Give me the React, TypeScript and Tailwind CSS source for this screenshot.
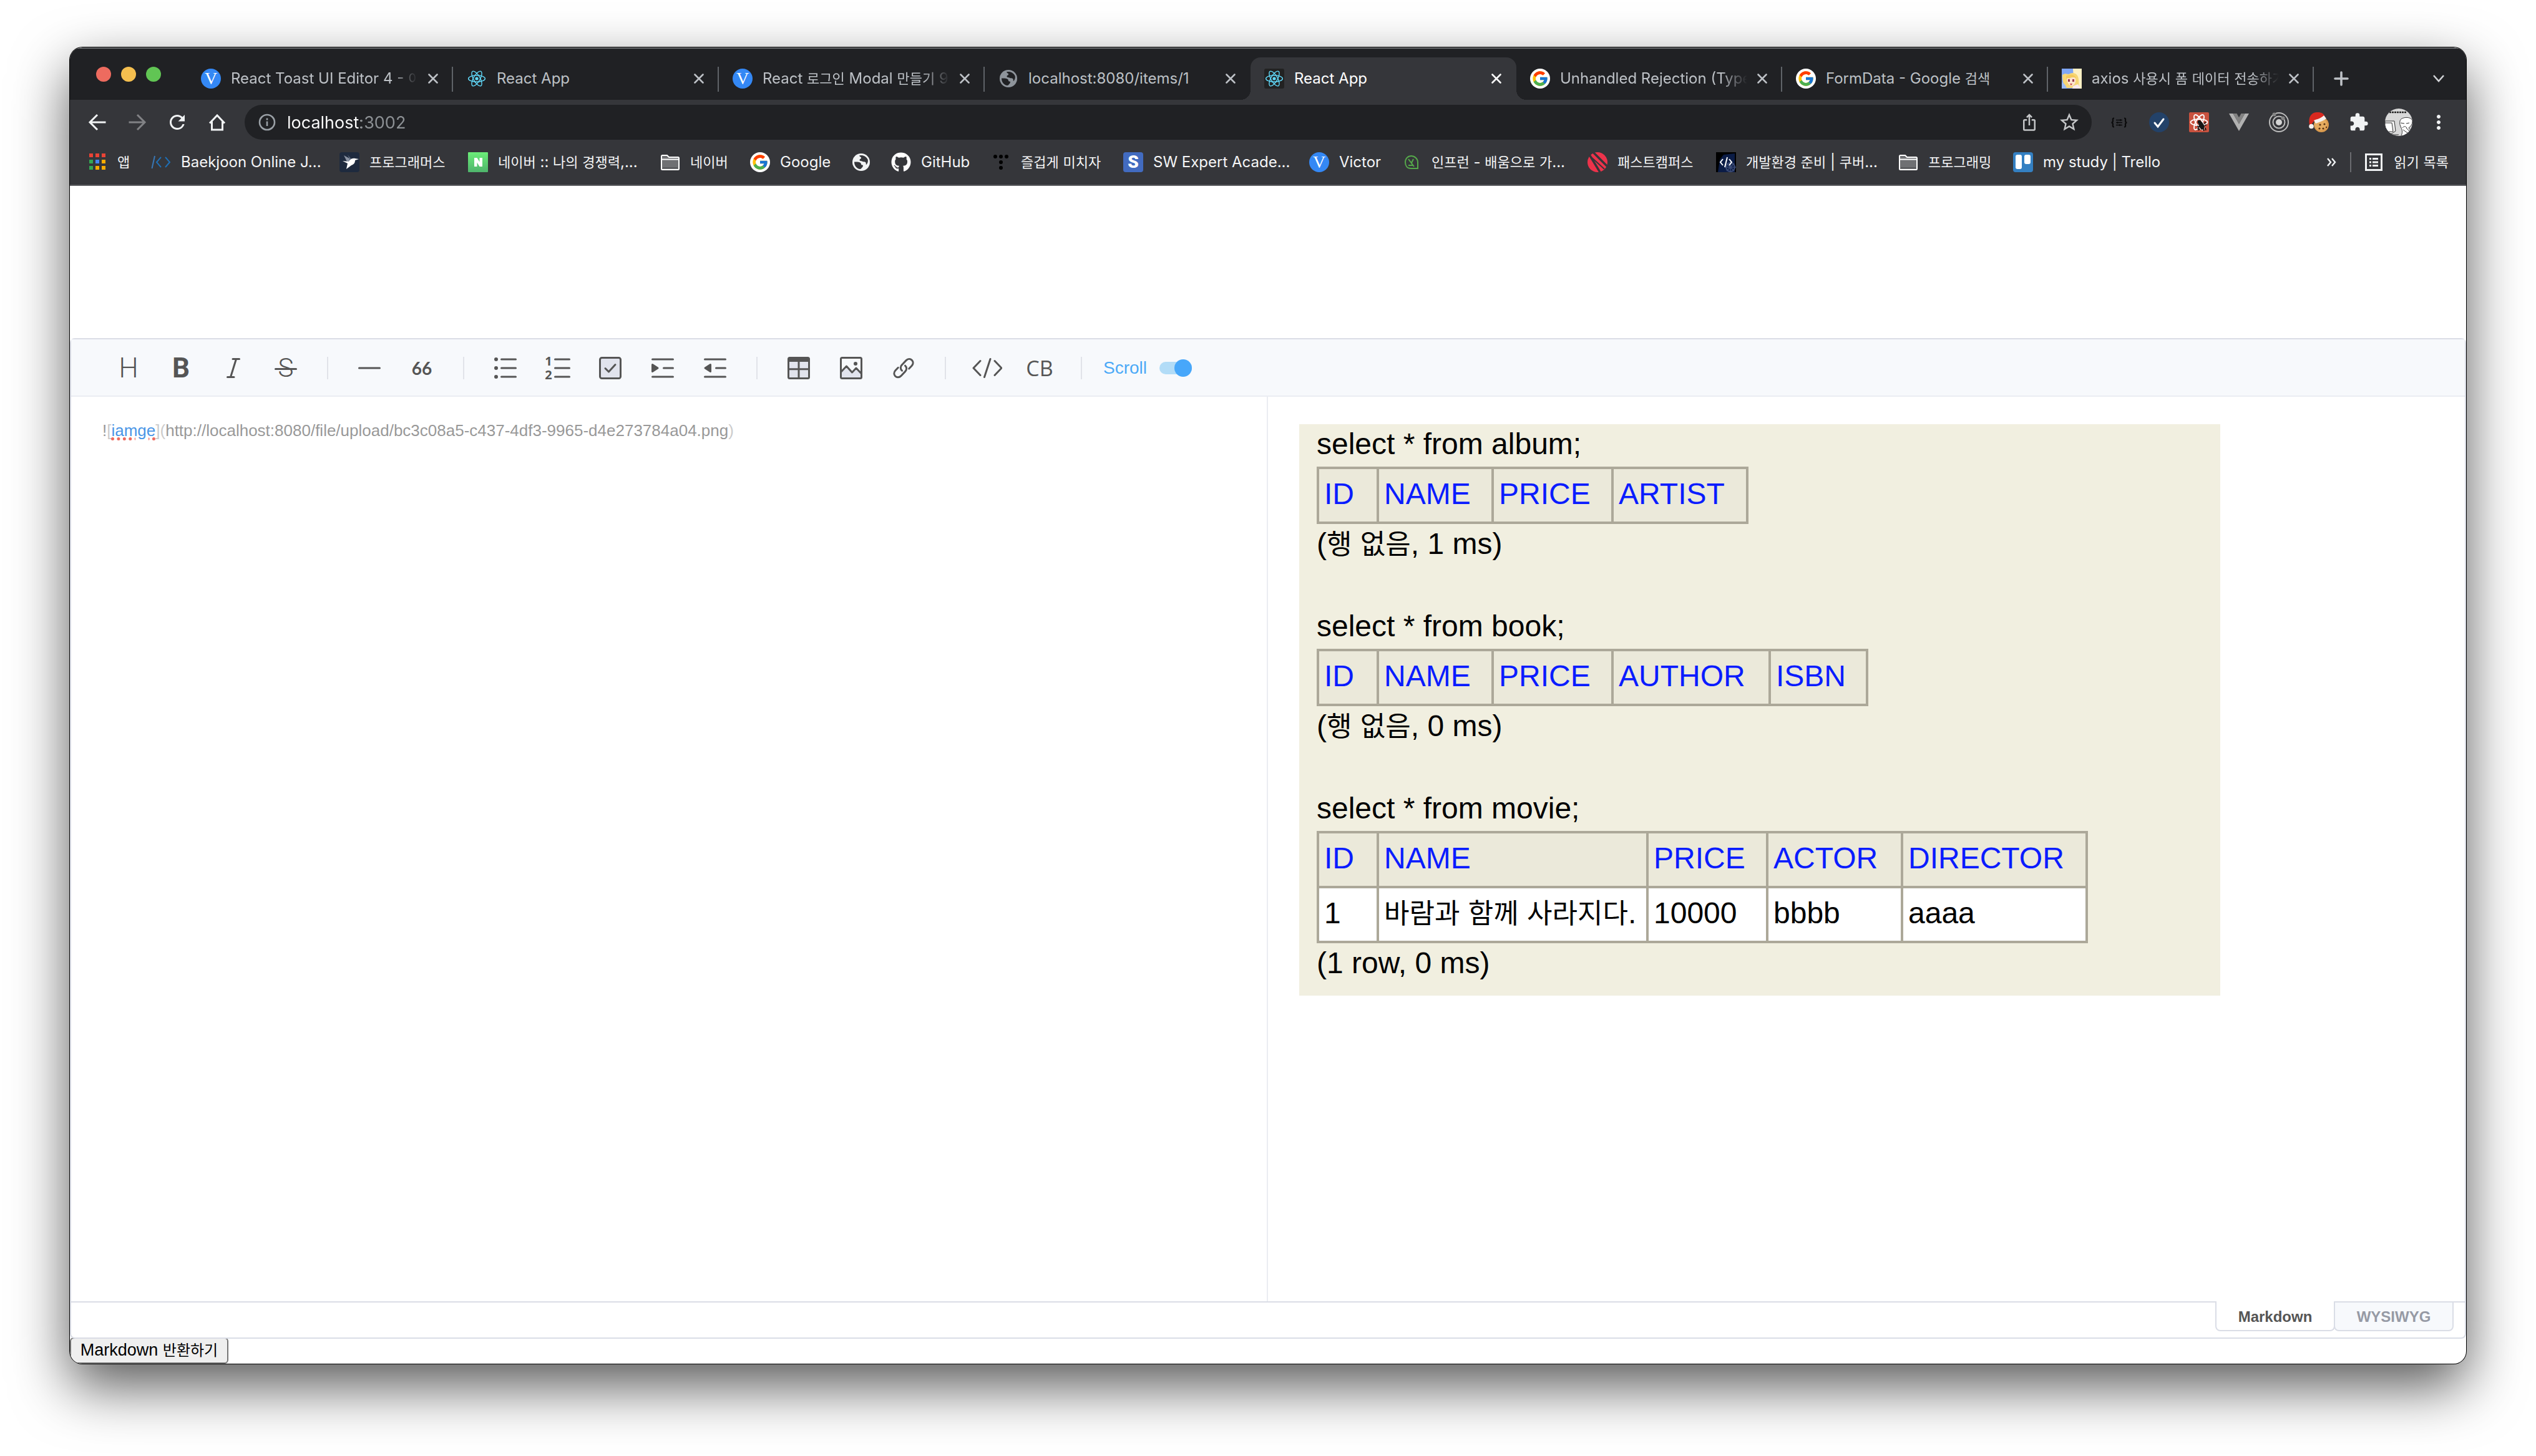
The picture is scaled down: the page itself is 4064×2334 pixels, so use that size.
import React from "react";
import { FaGithub } from "react-icons/fa";
import { FcGoogle } from "react-icons/fc";
import { MdExtension, MdIosShare, MdMoreVert, MdStarBorder, MdRefresh } from "react-icons/md";

/** Renders mixed Latin / Hangul text; Hangul runs are set slightly smaller. */
function Mixed({ text, ko }: { text: string; ko: string }) {
  return (
    <>
      {text.split(/([\uac00-\ud7a3]+)/).map((part, i) =>
        i % 2 === 1 ? (
          <span key={i} lang="ko" className={`${ko} leading-none`}>
            {part}
          </span>
        ) : (
          part
        ),
      )}
    </>
  );
}

/* ---------- favicons ---------- */

const V = () => (
  <span className="flex size-8 items-center justify-center rounded-full bg-[#3488f5] font-['Liberation_Serif',serif] text-[28px] leading-8 text-white">
    V
  </span>
);

const ReactMark = ({ boxed = false }: { boxed?: boolean }) => (
  <svg viewBox="0 0 32 32" className="size-8">
    {boxed && <rect width="32" height="32" rx="3" fill="#222" />}
    <g fill="none" stroke="#61dafb" strokeWidth="1.4">
      <ellipse cx="16" cy="16" rx="13.4" ry="5.2" />
      <ellipse cx="16" cy="16" rx="13.4" ry="5.2" transform="rotate(60 16 16)" />
      <ellipse cx="16" cy="16" rx="13.4" ry="5.2" transform="rotate(120 16 16)" />
    </g>
    <circle cx="16" cy="16" r="2.6" fill="#61dafb" />
  </svg>
);

const Globe = ({ fill, hole }: { fill: string; hole: string }) => (
  <svg viewBox="0 0 32 32" className="size-8">
    <circle cx="16" cy="16" r="14" fill={fill} />
    <path
      d="M5 15.500c4 0 8-.2 10 1.500 1.500 1.500.3 3.500 3 3.500 1.500 0 1 2.500 0 3.500-1 .8-1.500 2.500-3.500 3C9 26.500 5 22 5 15.500z"
      fill={hole}
    />
    <path
      d="M13 5.500c1 2.500 3.500 1.500 3 4-.3 1.500-2.500 1-2.500 3s3 1.300 4.500 2.300c1.800 1.200 4.500 0 5.500 2 .6 1.300-.3 2 .7 3.200C26.500 18 27.500 14 26.500 11.500 24 6.500 18.500 4 13 5.500z"
      fill={hole}
    />
  </svg>
);

const Google = () => (
  <span className="flex size-8 items-center justify-center rounded-full bg-white">
    <FcGoogle className="size-[28px]" />
  </span>
);

const Anime = () => (
  <svg viewBox="0 0 32 32" className="size-8">
    <rect width="32" height="32" fill="#7fa6f5" />
    <path d="M18 0h14v32H20z" fill="#fdf0c4" />
    <path d="M1 10 5 8l6 1c6-4 13-2 15 4 2 5 1 12 2 18H8C2 27 1 18 1 10z" fill="#f7d675" />
    <path d="M8 15c4-4 12-4 14 1 1 6-1 10-6 12-5-1-8-6-8-13z" fill="#fde3cf" />
    <path d="M7 12c5-3 13-4 16 3-5-2-9-1-11 1-1-1-3-1-5 1z" fill="#f4c95a" />
    <path d="M10 17h3v4h-3zM17 17h3v4h-3z" fill="#9a3b4f" />
    <path d="M13 24h4l-2 3z" fill="#c8433f" />
    <path d="M0 22c4 1 7 6 8 10H0z" fill="#9dbcf8" />
    <path d="M18 28l8-3 4 7H17z" fill="#fbe9ef" />
  </svg>
);

const AppsGrid = () => (
  <svg viewBox="0 0 32 32" className="size-8">
    {["#ea4335", "#ea4335", "#ea4335", "#34a853", "#4285f4", "#f9ab00", "#34a853", "#f9ab00", "#f9ab00"].map((c, i) => (
      <rect key={i} x={3 + (i % 3) * 10} y={2 + Math.floor(i / 3) * 10} width="6" height="6" fill={c} />
    ))}
  </svg>
);

const Baekjoon = () => (
  <svg viewBox="0 0 32 32" className="size-8" fill="none" stroke="#1f6fb5" strokeWidth="2">
    <path d="M6 6 1.500 26" stroke="#3a78b5" />
    <path d="M16 8 9 16l7 8M23 8l7 8-7 8" />
  </svg>
);

const Programmers = () => (
  <svg viewBox="0 0 32 32" className="size-8">
    <rect width="32" height="32" rx="4" fill="#1e2a3e" />
    <path d="M7 5l9 5 1 6-5-1z" fill="#8a93a3" />
    <path d="M13 4l6 7-1 4z" fill="#5d6a7f" />
    <path d="M5 14l10 1c2-4 6-6 10-5l6 1-6 2c0 5-3 7-6 8l-8 6 2-9z" fill="#fff" />
  </svg>
);

const Naver = () => (
  <svg viewBox="0 0 32 32" className="size-8">
    <defs>
      <linearGradient id="naver" x1="0" y1="0" x2="0" y2="1">
        <stop offset="0" stopColor="#6bed78" />
        <stop offset="1" stopColor="#4fb46c" />
      </linearGradient>
    </defs>
    <rect width="32" height="32" rx="1" fill="url(#naver)" />
    <path d="M10 9h4.500l4 6.500V9H23v14h-4.500l-4-6.500V23H10z" fill="#fff" />
  </svg>
);

const Folder = () => (
  <svg viewBox="0 0 32 32" className="size-8" stroke="#fff" strokeWidth="2">
    <path d="M2 6.500Q2 5 3.500 5H11l3 3h14.500Q30 8 30 9.500v17q0 1.500-1.500 1.500h-25Q2 28 2 26.500z" fill="#6f7073" />
    <path d="M2 11.500h28" />
    <path d="M4 25h24" stroke="#58595c" />
  </svg>
);

const Dots = () => (
  <svg viewBox="0 0 32 32" className="size-8" fill="#000">
    <circle cx="7" cy="7" r="3" />
    <circle cx="16" cy="7" r="3" />
    <circle cx="25" cy="7" r="3" />
    <circle cx="16" cy="16" r="3" />
    <circle cx="16" cy="25" r="3" />
  </svg>
);

const SwExpert = () => (
  <span className="flex size-8 items-center justify-center rounded-[4px] bg-[#426bc0] font-['Roboto',sans-serif] text-[28px] font-black leading-8 text-white">
    S
  </span>
);

const Inflearn = () => (
  <svg viewBox="0 0 32 32" className="size-8" fill="none" stroke="#55a84a" strokeWidth="2">
    <path d="M26 26H15C9 26 6 21.500 6 16S10 6 15.500 6 26 10.500 26 16z" />
    <path d="M11 11l9 12M19 11l-3 6M11 21h8" />
  </svg>
);

const FastCampus = () => (
  <svg viewBox="0 0 32 32" className="size-8">
    <circle cx="16" cy="16" r="16" fill="#ed334b" />
    <path d="M3 4 20 32M9 0 32 23" stroke="#35363a" strokeWidth="3.500" />
    <path d="M5 7 27 27" stroke="#35363a" strokeWidth="2" />
  </svg>
);

const Kube = () => (
  <svg viewBox="0 0 32 32" className="size-8">
    <rect width="32" height="32" fill="#000" />
    <path d="M12 4l18-2v30H3l3-20z" fill="#0b1c46" />
    <circle cx="23" cy="24" r="7" fill="none" stroke="#3a4a75" strokeWidth="2" />
    <path d="M23 15v17M14 24h18M17 18l12 12M29 18 17 30" stroke="#3a4a75" strokeWidth="1.500" />
    <path d="M11 11l-4 5 4 5M21 11l4 5-4 5M18 8l-4 16" fill="none" stroke="#fff" strokeWidth="2" />
  </svg>
);

const Trello = () => (
  <svg viewBox="0 0 32 32" className="size-8">
    <rect width="32" height="32" rx="4" fill="#3480c2" />
    <rect x="4" y="4" width="10" height="23" rx="3" fill="#fff" />
    <rect x="18" y="4" width="10" height="15" rx="3" fill="#fff" />
  </svg>
);

/* ---------- browser window chrome ---------- */

type Tab = { icon: React.ReactNode; title: string; active?: boolean; line?: boolean; fade?: boolean };

const tabs: Tab[] = [
  { icon: <V />, title: "React Toast UI Editor 4 - 이", line: true, fade: true },
  { icon: <ReactMark />, title: "React App", line: true },
  { icon: <V />, title: "React 로그인 Modal 만들기 9", line: true, fade: true },
  { icon: <Globe fill="#8e949b" hole="#202124" />, title: "localhost:8080/items/1" },
  { icon: <ReactMark boxed />, title: "React App", active: true },
  { icon: <Google />, title: "Unhandled Rejection (Type", line: true, fade: true },
  { icon: <Google />, title: "FormData - Google 검색", line: true },
  { icon: <Anime />, title: "axios 사용시 폼 데이터 전송하기", line: true, fade: true },
];

const Cross = () => (
  <svg viewBox="0 0 16 16" className="size-4" stroke="currentColor" strokeWidth="2.600" strokeLinecap="round">
    <path d="M1.500 1.500l13 13M14.500 1.500l-13 13" />
  </svg>
);

function TabStrip() {
  return (
    <div className="flex h-[82px] items-end bg-[#202124] pl-[42px]">
      <div className="flex h-full items-center gap-4 pr-[42px]">
        <button aria-label="Close window" className="size-6 rounded-full bg-[#ed6b5f]" />
        <button aria-label="Minimize window" className="size-6 rounded-full bg-[#f5bf4f]" />
        <button aria-label="Zoom window" className="size-6 rounded-full bg-[#61c554]" />
      </div>
      <div className="flex flex-1">
        <div className="flex shrink" role="tablist">
          {tabs.map((t, i) => (
            <div
              key={i}
              role="tab"
              aria-selected={!!t.active}
              className={
                t.active
                  ? "relative flex h-[68px] w-[426px] items-center rounded-t-2xl bg-[#35363a] pr-6 pl-[22px] text-white before:absolute before:bottom-0 before:-left-4 before:size-4 before:bg-[radial-gradient(circle_at_0_0,transparent_16px,#35363a_16px)] after:absolute after:-right-4 after:bottom-0 after:size-4 after:bg-[radial-gradient(circle_at_100%_0,transparent_16px,#35363a_16px)]"
                  : "relative flex h-[68px] w-[426px] items-center pr-6 pl-[22px] text-[#bdc1c6]"
              }
            >
              {t.icon}
              <span
                className={
                  t.fade
                    ? "ml-4 w-[300px] overflow-hidden text-2xl leading-9 whitespace-nowrap [mask-image:linear-gradient(90deg,#000_86%,transparent)]"
                    : "ml-4 w-[300px] overflow-hidden text-2xl leading-9 whitespace-nowrap"
                }
              >
                <Mixed text={t.title} ko="text-[22px]" />
              </span>
              <button aria-label={`Close ${t.title}`} className="ml-auto">
                <Cross />
              </button>
              {t.line && <span className="absolute top-[15px] right-0 h-10 w-0.5 bg-[#5f6368]" />}
            </div>
          ))}
        </div>
        <button aria-label="New tab" className="ml-8 flex items-center text-[#bdc1c6]">
          <svg viewBox="0 0 24 24" className="size-6" stroke="currentColor" strokeWidth="3.600" strokeLinecap="round">
            <path d="M12 2v20M2 12h20" />
          </svg>
        </button>
        <button aria-label="Search tabs" className="mr-[34px] ml-auto flex items-center text-[#d0d2d5]">
          <svg viewBox="0 0 20 20" className="size-5" fill="none" stroke="currentColor" strokeWidth="2.600">
            <path d="M2 5l8 9 8-9" />
          </svg>
        </button>
      </div>
    </div>
  );
}

const navIcon = "flex size-8 items-center justify-center";

const Cookie = () => (
  <svg viewBox="0 0 32 32" className="size-8">
    <circle cx="20" cy="20" r="12" fill="#d99a4e" />
    <circle cx="19" cy="19" r="10" fill="#e5ac60" />
    <g fill="#5b3413">
      <circle cx="18" cy="20" r="1.600" />
      <circle cx="25" cy="19" r="1.600" />
      <circle cx="17" cy="26" r="1.600" />
      <circle cx="23" cy="26" r="1.600" />
      <circle cx="28" cy="24" r="1.200" />
    </g>
    <path d="M1 20C-1 10 2 1 12 0c8-1 13 3 14 8L9 14c-3 2-4 4-5 7z" fill="#d9291f" />
    <path d="M8 13c5-2 11-3 16-8l4 5c-5 4-12 6-17 8z" fill="#f4f1ee" />
    <circle cx="4" cy="22.500" r="3.800" fill="#f4f1ee" />
  </svg>
);

const Avatar = () => (
  <svg viewBox="0 0 44 44" className="size-11">
    <defs>
      <clipPath id="avatar">
        <circle cx="22" cy="22" r="22" />
      </clipPath>
    </defs>
    <g clipPath="url(#avatar)" stroke="#333" strokeWidth="1">
      <rect width="44" height="44" fill="#d8d8d8" stroke="none" />
      <path d="M7 6h27" stroke="#222" strokeWidth="2.500" strokeDasharray="3 1" />
      <path d="M0 20h15l2 16-6 4H0z" fill="#f0f0f0" />
      <path d="M0 23h11l2 14H0z" fill="#fff" />
      <path d="M24 20c1-7 19-8 20 0 0 5-2 8-6 11l6 8v5H26c2-5 2-9 0-13-2-4-3-7-2-11z" fill="#fff" />
      <path d="M25 23l6 1M34 24l5-1M28 31c2-3 5-3 7 0M29 34l7 5M34 31l6 6M12 42h10" fill="none" />
    </g>
  </svg>
);

const extensions: { name: string; icon: React.ReactNode }[] = [
  {
    name: "JSON viewer",
    icon: (
      <svg viewBox="0 0 32 32" className="size-8" fill="none" stroke="#0b0b0c" strokeWidth="2.200">
        <path d="M8 9.500c-3 0-2 2-2 4S5 16.500 3.500 16.500C5 16.500 6 17.500 6 19.500s-1 4 2 4M24 9.500c3 0 2 2 2 4s1 3 2.500 3c-1.500 0-2.500 1-2.500 3s1 4-2 4" />
        <path d="M11 12.500h10M11 16.500h10M11 20.500h10M18 11v3M13.500 15v3M17 19v3" strokeWidth="1.600" />
      </svg>
    ),
  },
  {
    name: "Checker",
    icon: (
      <svg viewBox="0 0 32 32" className="size-8">
        <circle cx="16" cy="16" r="16" fill="#234269" />
        <path d="M9 17l5 6 9-12" fill="none" stroke="#fff" strokeWidth="3" strokeLinecap="round" />
      </svg>
    ),
  },
  {
    name: "React developer tools",
    icon: (
      <svg viewBox="0 0 32 32" className="size-8">
        <rect width="32" height="32" rx="2" fill="#c9523f" />
        <g fill="none" stroke="#fff" strokeWidth="1.800">
          <ellipse cx="16" cy="16" rx="13.500" ry="5" />
          <ellipse cx="16" cy="16" rx="13.500" ry="5" transform="rotate(60 16 16)" />
          <ellipse cx="16" cy="16" rx="13.500" ry="5" transform="rotate(120 16 16)" />
        </g>
        <path d="M15 17l3-3 3 2 4 6-1 5-4 1-4-5z" fill="#161616" />
        <path d="M13 22l3 1-2 4M17 26l-2 3M24 18l3-2M25 21l3-1M26 25l1 4M23 27l1 3" stroke="#161616" strokeWidth="1.800" fill="none" />
        <circle cx="16.500" cy="15.500" r="2.800" fill="#161616" />
      </svg>
    ),
  },
  {
    name: "Vue devtools",
    icon: (
      <svg viewBox="0 0 32 32" className="size-8">
        <path d="M0 2h6.500L16 18.500 25.500 2H32L16 30z" fill="#b1b1b1" />
        <path d="M6.500 2h6L16 8.200 19.500 2h6L16 18.500z" fill="#828282" />
      </svg>
    ),
  },
  {
    name: "Orbit rings",
    icon: (
      <svg viewBox="0 0 32 32" className="size-8" fill="none" stroke="#bdbdbd" strokeWidth="2">
        <circle cx="16" cy="16" r="15" />
        <circle cx="16" cy="16" r="9.500" />
        <circle cx="16" cy="16" r="5" fill="#d4d4d4" stroke="none" />
        <circle cx="8.500" cy="3.500" r="3" fill="#858585" stroke="none" />
        <circle cx="22.500" cy="9.500" r="3" fill="#858585" stroke="none" />
      </svg>
    ),
  },
  { name: "Cookie editor", icon: <Cookie /> },
  { name: "Extensions", icon: <MdExtension className="size-8 text-[#f1f3f4]" /> },
];

function AddressBar() {
  return (
    <div className="flex h-[72px] items-center bg-[#35363a] pr-7 pl-7">
      <div className="flex items-center gap-8 pr-7">
        <button aria-label="Back" className={navIcon}>
          <svg viewBox="0 0 32 32" className="size-8" fill="none" stroke="#f1f3f4" strokeWidth="3">
            <path d="M29.500 16H4.500M16 4 4 16l12 12" />
          </svg>
        </button>
        <button aria-label="Forward" className={navIcon}>
          <svg viewBox="0 0 32 32" className="size-8" fill="none" stroke="#818285" strokeWidth="3">
            <path d="M2.500 16h25M16 4l12 12-12 12" />
          </svg>
        </button>
        <button aria-label="Reload" className={navIcon}>
          <MdRefresh className="size-9 shrink-0 text-[#f1f3f4]" />
        </button>
        <button aria-label="Home" className={navIcon}>
          <svg viewBox="0 0 32 32" className="size-8" fill="none" stroke="#f1f3f4" strokeWidth="3">
            <path d="M7.500 15v13h17V15M4 17.500 16 5l12 12.500" />
          </svg>
        </button>
      </div>
      <div className="flex h-14 flex-1 items-center rounded-full bg-[#202124] px-5">
        <svg viewBox="0 0 32 32" className="size-8 shrink-0" fill="none" stroke="#9aa0a6" strokeWidth="2.600">
          <circle cx="16" cy="16" r="12" />
          <path d="M16 14.500v7.500M16 9.500v3" />
        </svg>
        <input
          aria-label="Address"
          defaultValue="localhost:3002"
          className="ml-4 flex-1 bg-[linear-gradient(90deg,#fff_118px,#8d9195_118px)] bg-clip-text pt-0.5 text-[27px] leading-10 text-transparent outline-none"
        />
        <button aria-label="Share" className={navIcon}>
          <MdIosShare className="size-[30px] shrink-0 text-[#c4c6c8]" />
        </button>
        <button aria-label="Bookmark" className="ml-8 flex size-8 items-center justify-center">
          <MdStarBorder className="size-9 shrink-0 text-[#c4c6c8]" />
        </button>
      </div>
      <div className="flex items-center gap-8 pl-7">
        {extensions.map((e) => (
          <button key={e.name} aria-label={e.name} className="size-8">
            {e.icon}
          </button>
        ))}
        <button aria-label="Profile" className="-mx-1.5 size-11">
          <Avatar />
        </button>
        <button aria-label="Menu" className={navIcon}>
          <MdMoreVert className="size-9 shrink-0 text-[#f1f3f4]" />
        </button>
      </div>
    </div>
  );
}

const bookmarks: { icon: React.ReactNode; label: string; w: string }[] = [
  { icon: <AppsGrid />, label: "앱", w: "w-[102px]" },
  { icon: <Baekjoon />, label: "Baekjoon Online J...", w: "w-[302px]" },
  { icon: <Programmers />, label: "프로그래머스", w: "w-[206px]" },
  { icon: <Naver />, label: "네이버 :: 나의 경쟁력,...", w: "w-[308px]" },
  { icon: <Folder />, label: "네이버", w: "w-[144px]" },
  { icon: <Google />, label: "Google", w: "w-[162px]" },
  { icon: <Globe fill="#f1f3f4" hole="#35363a" />, label: "", w: "w-[64px]" },
  { icon: <FaGithub className="size-8 text-white" />, label: "GitHub", w: "w-[160px]" },
  { icon: <Dots />, label: "즐겁게 미치자", w: "w-[212px]" },
  { icon: <SwExpert />, label: "SW Expert Acade...", w: "w-[298px]" },
  { icon: <V />, label: "Victor", w: "w-[148px]" },
  { icon: <Inflearn />, label: "인프런 - 배움으로 가...", w: "w-[298px]" },
  { icon: <FastCampus />, label: "패스트캠퍼스", w: "w-[206px]" },
  { icon: <Kube />, label: "개발환경 준비 | 쿠버...", w: "w-[292px]" },
  { icon: <Folder />, label: "프로그래밍", w: "w-[184px]" },
  { icon: <Trello />, label: "my study | Trello", w: "w-[240px]" },
];

function BookmarksBar() {
  return (
    <nav className="flex h-[66px] items-center border-b-2 border-[#5b5c60] bg-[#35363a] pr-7 pb-2 pl-7 text-2xl leading-9 whitespace-nowrap text-[#f4f5f6]">
      {bookmarks.map((b, i) => (
        <a key={i} href="#" aria-label={b.label || "Bookmark"} className={`flex shrink-0 items-center gap-4 ${b.w}`}>
          <span className="size-8 shrink-0">{b.icon}</span>
          <span>
            <Mixed text={b.label} ko="text-[22px]" />
          </span>
        </a>
      ))}
      <button aria-label="More bookmarks" className="ml-auto">
        <svg viewBox="0 0 16 16" className="size-4" fill="none" stroke="#f1f3f4" strokeWidth="2.400">
          <path d="M2 2l5 6-5 6M9 2l5 6-5 6" />
        </svg>
      </button>
      <span className="ml-[22px] h-8 w-0.5 bg-[#6a6b6f]" />
      <button className="ml-5 flex items-center gap-4">
        <svg viewBox="0 0 32 32" className="size-8" fill="none" stroke="#f1f3f4" strokeWidth="3">
          <rect x="3.500" y="3.500" width="25" height="25" />
          <path d="M9 10.500h3M9 16h3M9 21.500h3M14 10.500h9M14 16h9M14 21.500h9" />
        </svg>
        <span>
          <Mixed text="읽기 목록" ko="text-[22px]" />
        </span>
      </button>
    </nav>
  );
}

/* ---------- markdown editor ---------- */

const stroke = { fill: "none", stroke: "#555", strokeWidth: 3, strokeLinecap: "round" as const, strokeLinejoin: "round" as const };

const toolGroups: { name: string; icon: React.ReactNode }[][] = [
  [
    { name: "Headings", icon: <span className="font-['Roboto',sans-serif] text-[44px] leading-none font-light">H</span> },
    { name: "Bold", icon: <span className="font-['Roboto',sans-serif] text-[44px] leading-none font-bold">B</span> },
    {
      name: "Italic",
      icon: (
        <svg viewBox="0 0 24 36" className="h-9 w-6" {...stroke}>
          <path d="M11 3.500h10.500M2.500 32.500H13M16.500 3.500l-9 29" />
        </svg>
      ),
    },
    {
      name: "Strike",
      icon: (
        <span className="relative font-['Roboto',sans-serif] text-[42px] leading-none font-light after:absolute after:top-1/2 after:-left-1.5 after:h-[3px] after:w-9 after:rounded-full after:bg-[#555]">
          S
        </span>
      ),
    },
  ],
  [
    { name: "Line", icon: <svg viewBox="0 0 36 36" className="size-9" {...stroke}><path d="M1.500 18h33" /></svg> },
    { name: "Blockquote", icon: <span className="font-['Lato',sans-serif] text-[28px] leading-none font-bold">66</span> },
  ],
  [
    {
      name: "Unordered list",
      icon: (
        <svg viewBox="0 0 36 36" className="size-9" {...stroke}>
          <path d="M11.500 4h23M11.500 18h23M11.500 32h23" />
          <g fill="#555" stroke="none">
            <circle cx="3" cy="4" r="3" />
            <circle cx="3" cy="18" r="3" />
            <circle cx="3" cy="32" r="3" />
          </g>
        </svg>
      ),
    },
    {
      name: "Ordered list",
      icon: (
        <span className="flex w-10 items-center gap-1">
          <span className="flex w-[10px] flex-col items-center font-['Open_Sans',sans-serif] text-[20px] leading-[22px] font-bold">
            <span>1</span>
            <span>2</span>
          </span>
          <svg viewBox="0 0 26 36" className="h-9 w-[26px]" {...stroke}>
            <path d="M1.500 4h23M1.500 18h23M1.500 32h23" />
          </svg>
        </span>
      ),
    },
    {
      name: "Task",
      icon: (
        <svg viewBox="0 0 36 36" className="size-9" {...stroke}>
          <rect x="1.500" y="1.500" width="33" height="33" rx="3" fill="#e1e3ed" />
          <path d="M10 18.500l5.500 5.500 10.500-11.500" />
        </svg>
      ),
    },
    {
      name: "Indent",
      icon: (
        <svg viewBox="0 0 36 36" className="size-9" {...stroke}>
          <path d="M1.500 4h33M19.500 18h15M1.500 32h33" />
          <path d="M1.500 12.500v11L10 18z" fill="#555" />
        </svg>
      ),
    },
    {
      name: "Outdent",
      icon: (
        <svg viewBox="0 0 36 36" className="size-9" {...stroke}>
          <path d="M1.500 4h33M19.500 18h15M1.500 32h33" />
          <path d="M10.500 12.500v11L2 18z" fill="#555" />
        </svg>
      ),
    },
  ],
  [
    {
      name: "Insert table",
      icon: (
        <svg viewBox="0 0 36 36" className="size-9" {...stroke}>
          <rect x="1.500" y="1.500" width="33" height="33" rx="2" fill="#e1e3ed" />
          <path d="M1.500 5h33" strokeWidth="6" strokeLinecap="butt" />
          <path d="M18 7v27M2 19.800h32" />
        </svg>
      ),
    },
    {
      name: "Insert image",
      icon: (
        <svg viewBox="0 0 36 36" className="size-9" {...stroke}>
          <path d="M2 25l9-9 8 8 6-6 9 8v8H2z" fill="#e1e3ed" stroke="none" />
          <path d="M2 24l8.500-9 9 10 6.500-7 8 8.500" />
          <rect x="1.500" y="1.500" width="33" height="33" rx="2" />
          <circle cx="25" cy="11" r="3" fill="#555" stroke="none" />
        </svg>
      ),
    },
    {
      name: "Insert link",
      icon: (
        <svg viewBox="0 0 24 24" className="size-10" fill="none" stroke="#555" strokeWidth="1.800" strokeLinecap="round">
          <path d="M10.500 14.500c-1.800-1.600-1.700-4 0-5.700l4-4.200c1.700-1.700 4-1.700 5.500-.2 1.500 1.600 1.400 3.800-.2 5.500l-2.600 2.700" />
          <path d="M13.500 9.700c1.800 1.600 1.700 4 0 5.700l-4 4.200c-1.700 1.700-4 1.700-5.500.2-1.500-1.600-1.400-3.800.2-5.500l2.600-2.700" />
        </svg>
      ),
    },
  ],
  [
    {
      name: "Code",
      icon: (
        <svg viewBox="0 0 48 36" className="h-9 w-12" {...stroke}>
          <path d="M13 6.500 2 18l11 11.500M36 6.500 47 18 36 29.500M29 3.500 19.500 32.500" />
        </svg>
      ),
    },
    {
      name: "Code block",
      icon: <span className="font-['Liberation_Sans_Narrow','Open_Sans',sans-serif] text-[34px] leading-none">CB</span>,
    },
  ],
];

function Toolbar() {
  return (
    <div className="flex h-[92px] items-center border-b-2 border-[#ebedf2] bg-[#f7f9fc] px-[50px] pt-0.5 text-[#555]">
      {toolGroups.map((g, gi) => (
        <React.Fragment key={gi}>
          {g.map((t) => (
            <button key={t.name} aria-label={t.name} className="mx-2.5 flex size-16 items-center justify-center">
              {t.icon}
            </button>
          ))}
          <span className="mx-6 h-9 w-0.5 bg-[#e1e3e9]" />
        </React.Fragment>
      ))}
      <label className="ml-2.5 flex cursor-pointer items-center gap-5 text-[28px] leading-9 text-[#4ba9f7]">
        Scroll
        <input type="checkbox" defaultChecked className="peer sr-only" />
        <span className="flex h-5 w-[52px] items-center justify-end rounded-full bg-[#b2dcf7]">
          <span className="size-7 rounded-full bg-[#47a7fa]" />
        </span>
      </label>
    </div>
  );
}

type Result = { sql: string; cols: { name: string; w: string }[]; row?: string[]; note: string };

const results: Result[] = [
  {
    sql: "select * from album;",
    cols: [
      { name: "ID", w: "min-w-[96px]" },
      { name: "NAME", w: "min-w-[184px]" },
      { name: "PRICE", w: "min-w-[192px]" },
      { name: "ARTIST", w: "min-w-[216px]" },
    ],
    note: "(행 없음, 1 ms)",
  },
  {
    sql: "select * from book;",
    cols: [
      { name: "ID", w: "min-w-[96px]" },
      { name: "NAME", w: "min-w-[184px]" },
      { name: "PRICE", w: "min-w-[192px]" },
      { name: "AUTHOR", w: "min-w-[252px]" },
      { name: "ISBN", w: "min-w-[156px]" },
    ],
    note: "(행 없음, 0 ms)",
  },
  {
    sql: "select * from movie;",
    cols: [
      { name: "ID", w: "min-w-[96px]" },
      { name: "NAME", w: "min-w-[432px]" },
      { name: "PRICE", w: "min-w-[192px]" },
      { name: "ACTOR", w: "min-w-[216px]" },
      { name: "DIRECTOR", w: "min-w-[296px]" },
    ],
    row: ["1", "바람과 함께 사라지다.", "10000", "bbbb", "aaaa"],
    note: "(1 row, 0 ms)",
  },
];

function Preview() {
  return (
    <div className="flex w-[1476px] flex-col gap-[76px] bg-[#f1efe0] px-7 pt-1 pb-6 text-5xl leading-[56px] whitespace-nowrap text-black">
      {results.map((r) => (
        <section key={r.sql}>
          <p className="leading-[56px]">{r.sql}</p>
          <table className="mt-2 mb-1 border-collapse">
            <thead>
              <tr className="bg-[#ebe9da]">
                {r.cols.map((c) => (
                  <th key={c.name} className={`h-[88px] border-4 border-[#aca899] pr-1 pb-1 pl-2 text-left leading-[56px] font-normal text-[#0a1cff] ${c.w}`}>
                    {c.name}
                  </th>
                ))}
              </tr>
            </thead>
            {r.row && (
              <tbody>
                <tr className="bg-white">
                  {r.row.map((v) => (
                    <td key={v} className="h-[88px] border-4 border-[#aca899] pr-1 pb-1 pl-2 leading-[56px]">
                      <Mixed text={v} ko="text-[44px]" />
                    </td>
                  ))}
                </tr>
              </tbody>
            )}
          </table>
          <p className="leading-[56px]">
            <Mixed text={r.note} ko="text-[44px]" />
          </p>
        </section>
      ))}
    </div>
  );
}

function Editor() {
  return (
    <div className="relative z-10 flex flex-1 flex-col rounded-lg border-2 border-[#dadde6] bg-white">
      <Toolbar />
      <div className="grid flex-1 grid-cols-2">
        <div className="border-r-2 border-[#ebedf2] px-[50px] pt-[34px]">
          <div
            role="textbox"
            aria-label="Markdown source"
            contentEditable
            suppressContentEditableWarning
            spellCheck={false}
            className="text-[26px] leading-10 text-[#999] outline-none"
          >
            <span>!</span>
            <span className="text-[#ccc]">[</span>
            <span className="text-[#4b96e6] underline decoration-[#ee6a5f] decoration-dotted decoration-[5px] underline-offset-2">iamge</span>
            <span className="text-[#ccc]">](</span>
            <span>http://localhost:8080/file/upload/bc3c08a5-c437-4df3-9965-d4e273784a04.png</span>
            <span className="text-[#ccc]">)</span>
          </div>
        </div>
        <div className="px-[50px] pt-11">
          <Preview />
        </div>
      </div>
      <div className="flex h-[58px] justify-end text-2xl font-bold">
        <div className="flex-1 border-t-2 border-[#dadde6]" />
        <button className="h-12 w-[192px] rounded-b-lg border-2 border-t-0 border-[#dadde6] pt-1 text-[#555]">Markdown</button>
        <button className="-ml-0.5 h-12 w-[192px] rounded-b-lg border-2 border-[#dadde6] bg-[#f7f9fc] pt-0.5 text-[#969aa5]">WYSIWYG</button>
        <div className="w-[18px] border-t-2 border-[#dadde6]" />
      </div>
    </div>
  );
}

export default function App() {
  return (
    <div className="flex min-h-screen bg-white px-28 pt-[76px] pb-[148px] font-['Inter','Noto_Sans_CJK_KR',sans-serif]">
      <div className="flex flex-1 flex-col overflow-hidden rounded-[20px] bg-white shadow-[0_0_0_1px_#000,0_36px_90px_rgba(0,0,0,0.66)]">
        <header className="rounded-t-[20px] border-t-2 border-[#6a6c6f] bg-[#202124]">
          <TabStrip />
          <AddressBar />
          <BookmarksBar />
        </header>
        <main className="flex flex-1 flex-col pt-[244px] font-['Liberation_Sans','Noto_Sans_CJK_KR',sans-serif]">
          <Editor />
          <button className="-mt-0.5 h-[42px] w-[254px] rounded-md border-2 border-[#767676] bg-[#efefef] pb-0.5 text-[27px] leading-8 whitespace-nowrap text-black">
            <Mixed text="Markdown 반환하기" ko="text-2xl" />
          </button>
        </main>
      </div>
    </div>
  );
}
